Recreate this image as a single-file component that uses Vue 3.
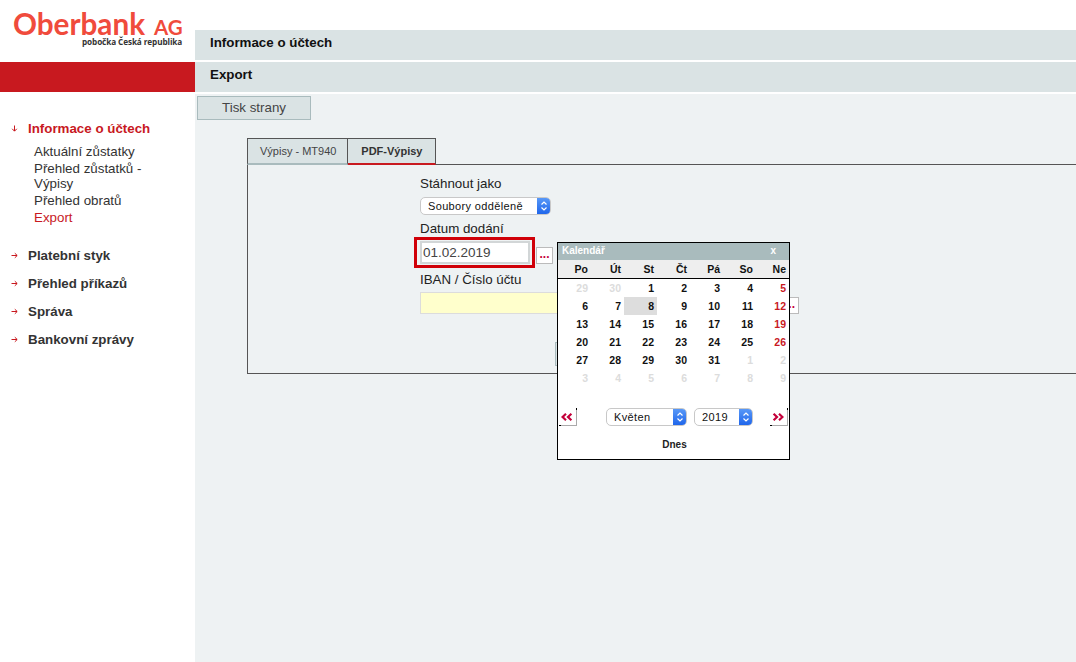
<script setup>
const subItems = [
  { text: 'Aktuální zůstatky' },
  { text: 'Přehled zůstatků - Výpisy' },
  { text: 'Přehled obratů' },
  { text: 'Export', active: true }
]
const navItems = ['Platební styk', 'Přehled příkazů', 'Správa', 'Bankovní zprávy']
const days = ['Po', 'Út', 'St', 'Čt', 'Pá', 'So', 'Ne']
const cells = []
const push = (n, muted) => cells.push({ n, muted })
push(29, true); push(30, true)
for (let i = 1; i <= 31; i++) push(i, false)
push(1, true); push(2, true)
for (let i = 3; i <= 9; i++) push(i, true)
const cellClass = (c, i) => ({
  muted: c.muted,
  sunday: !c.muted && i % 7 === 6,
  today: !c.muted && c.n === 8
})
</script>

<template>
  <div class="page">
    <aside class="side">
      <div class="logo">
        <div class="logo-main"><span>Oberbank</span><span class="logo-ag">AG</span></div>
        <div class="logo-sub">pobočka Česká republika</div>
      </div>
      <div class="band"></div>
      <nav class="nav">
        <div class="nav-item open">
          <svg class="arrow" width="7" height="7" viewBox="0 0 7 7"><path d="M3.5 0.5V6M1.2 3.8 3.5 6.2 5.8 3.8" fill="none" stroke="#c8191f" stroke-width="1"/></svg>
          <span>Informace o účtech</span>
        </div>
        <ul class="sub">
          <li v-for="s in subItems" :key="s.text" :class="{ active: s.active }">{{ s.text }}</li>
        </ul>
        <div class="nav-list">
          <div v-for="n in navItems" :key="n" class="nav-item">
            <svg class="arrow" width="7" height="7" viewBox="0 0 7 7"><path d="M0.5 3.5H6M3.8 1.2 6.2 3.5 3.8 5.8" fill="none" stroke="#c8191f" stroke-width="1"/></svg>
            <span>{{ n }}</span>
          </div>
        </div>
      </nav>
    </aside>

    <main class="main">
      <div class="bar first">Informace o účtech</div>
      <div class="bar">Export</div>
      <div class="content">
        <button class="print">Tisk strany</button>
        <div class="tabs">
          <div class="tab">Výpisy - MT940</div>
          <div class="tab current">PDF-Výpisy</div>
        </div>
        <div class="panel">
          <div class="form">
            <label class="lbl l1">Stáhnout jako</label>
            <div class="sel sel-type">
              <span>Soubory odděleně</span>
              <span class="sel-btn">
                <svg width="8" height="12" viewBox="0 0 8 12"><path d="M1.5 4.5 4 2l2.5 2.5M1.5 7.5 4 10l2.5-2.5" fill="none" stroke="#fff" stroke-width="1.2"/></svg>
              </span>
            </div>
            <label class="lbl l2">Datum dodání</label>
            <div class="date-row">
              <div class="date-frame"><div class="date-input">01.02.2019</div></div>
              <div class="dots">...</div>
            </div>
            <label class="lbl l3">IBAN / Číslo účtu</label>
            <div class="iban-row">
              <div class="iban"></div>
              <div class="dots">...</div>
            </div>
            <div class="submit"></div>

            <div class="cal">
              <div class="cal-title"><span>Kalendář</span><span class="cal-x">x</span></div>
              <div class="cal-grid cal-head">
                <div v-for="d in days" :key="d">{{ d }}</div>
              </div>
              <div class="cal-grid cal-body">
                <div v-for="(c, i) in cells" :key="i" :class="cellClass(c, i)">{{ c.n }}</div>
              </div>
              <div class="cal-nav">
                <div class="step">
                  <svg width="12" height="8" viewBox="0 0 12 8"><path d="M5 .8 1.6 4 5 7.2M10.4 .8 7 4l3.4 3.2" fill="none" stroke="#c4003a" stroke-width="2.2"/></svg>
                </div>
                <div class="sel sel-month">
                  <span>Květen</span>
                  <span class="sel-btn">
                    <svg width="8" height="12" viewBox="0 0 8 12"><path d="M1.5 4.5 4 2l2.5 2.5M1.5 7.5 4 10l2.5-2.5" fill="none" stroke="#fff" stroke-width="1.2"/></svg>
                  </span>
                </div>
                <div class="sel sel-year">
                  <span>2019</span>
                  <span class="sel-btn">
                    <svg width="8" height="12" viewBox="0 0 8 12"><path d="M1.5 4.5 4 2l2.5 2.5M1.5 7.5 4 10l2.5-2.5" fill="none" stroke="#fff" stroke-width="1.2"/></svg>
                  </span>
                </div>
                <div class="step">
                  <svg width="12" height="8" viewBox="0 0 12 8"><path d="M1.6 .8 5 4 1.6 7.2M7 .8 10.4 4 7 7.2" fill="none" stroke="#c4003a" stroke-width="2.2"/></svg>
                </div>
              </div>
              <div class="cal-today">Dnes</div>
            </div>
          </div>
        </div>
      </div>
    </main>
  </div>
</template>

<style>
html, body { margin: 0; background: #fff; }
</style>

<style scoped>
.page {
  display: flex;
  width: 1076px;
  height: 662px;
  overflow: hidden;
  background: #fff;
  font-family: "Liberation Sans", Arial, sans-serif;
  color: #333;
}
.side { width: 195px; flex: none; }
.logo { height: 62px; box-sizing: border-box; padding: 5px 0 0 13px; }
.logo-main {
  display: flex;
  align-items: baseline;
  font-family: Lato, sans-serif;
  font-weight: 700;
  font-size: 29.7px;
  line-height: 37px;
  height: 32px;
  color: #f04b3c;
  white-space: nowrap;
}
.logo-ag { font-size: 20.5px; margin-left: 9px; }
.logo-sub {
  font-family: "Open Sans", sans-serif;
  font-weight: 700;
  font-size: 8.2px;
  line-height: 10px;
  color: #333;
  margin-left: 69px;
  white-space: nowrap;
  letter-spacing: -0.1px;
}
.band { height: 30px; background: #c8191f; }
.nav { padding-top: 29px; }
.nav-item {
  display: flex;
  align-items: center;
  height: 14px;
  font-size: 13.33px;
  font-weight: 700;
  color: #333;
  padding-left: 11px;
}
.nav-item span { margin-left: 10px; }
.nav-item.open { color: #c8191f; }
.arrow { flex: none; margin-top: 1px; }
.sub {
  list-style: none;
  margin: 9px 0 0;
  padding: 0 40px 0 34px;
  font-size: 13.33px;
  line-height: 15px;
  color: #333;
}
.sub li { margin-bottom: 2px; }
.sub li.active { color: #c8191f; }
.nav-list {
  display: flex;
  flex-direction: column;
  gap: 14px;
  margin-top: 23px;
}

.main { flex: 1; padding-top: 30px; min-width: 0; }
.bar {
  height: 30px;
  margin-bottom: 2px;
  background: #dae3e4;
  padding-left: 15px;
  font-size: 13.33px;
  font-weight: 700;
  line-height: 26px;
  color: #111;
}
.content {
  height: 568px;
  background: #eef2f3;
  padding: 2px 0 0 2px;
  box-sizing: border-box;
  margin-top: 2px;
}
.print {
  display: block;
  width: 114px;
  height: 24px;
  padding: 0 0 2px;
  background: #dae3e4;
  border: 1px solid #a9bbbd;
  font: 13.33px "Liberation Sans", Arial, sans-serif;
  color: #444;
}
.tabs { display: flex; margin: 18px 0 0 50px; height: 26px; }
.tab {
  box-sizing: border-box;
  height: 27px;
  padding: 0 11px 0 12px;
  background: #dae3e4;
  border: 1px solid #555;
  border-bottom: 2px solid #a9bbbd;
  font-size: 11px;
  line-height: 25px;
  color: #444;
  white-space: nowrap;
}
.tab + .tab { border-left: 0; }
.tab.current {
  width: 88px;
  padding: 0;
  text-align: center;
  font-weight: 700;
  color: #333;
  border-bottom: 2px solid #c8191f;
}
.panel {
  box-sizing: border-box;
  width: 900px;
  height: 210px;
  margin-left: 50px;
  border: 1px solid #555;
  padding-left: 172px;
}
.form { position: relative; width: 379px; padding-top: 11px; }
.lbl {
  display: block;
  font-size: 13.33px;
  line-height: 15px;
  color: #222;
}
.sel {
  box-sizing: border-box;
  display: flex;
  align-items: center;
  justify-content: space-between;
  height: 18px;
  background: #fff;
  border: 1px solid #c8c8c8;
  border-radius: 5px;
  font-size: 11px;
  letter-spacing: 0.35px;
  color: #111;
  overflow: hidden;
  padding-left: 7px;
}
.sel-btn {
  display: flex;
  align-items: center;
  justify-content: center;
  width: 14px;
  height: 18px;
  margin-right: -1px;
  background: linear-gradient(#5b9bf8, #1c63ea);
}
.sel-type { width: 131px; margin-top: 6px; }
.l2 { margin-top: 6px; }
.date-row { display: flex; align-items: flex-start; margin: 1px 0 0 -6px; height: 31px; }
.date-frame {
  box-sizing: border-box;
  width: 121px;
  height: 31px;
  border: 3px solid #d00008;
  padding: 1px 2px 1px 3px;
}
.date-input {
  box-sizing: border-box;
  width: 110px;
  height: 23px;
  background: #fff;
  border: 2px solid #d2d6d7;
  font-size: 13.5px;
  line-height: 19px;
  padding-left: 1px;
  color: #444;
}
.dots {
  box-sizing: border-box;
  width: 18px;
  height: 17px;
  background: #fff;
  border: 1px solid #bbb;
  font-weight: 700;
  font-size: 12px;
  line-height: 12px;
  text-align: center;
  color: #c4003a;
}
.date-row .dots { width: 17px; margin: 10px 0 0 1px; }
.l3 { margin-top: 4px; }
.iban-row { display: flex; align-items: flex-end; margin-top: 5px; }
.iban {
  box-sizing: border-box;
  width: 361px;
  height: 22px;
  background: #ffffcc;
  border: 1px solid #dcdcdc;
}
.submit {
  box-sizing: border-box;
  width: 100px;
  height: 24px;
  margin: 28px 0 0 135px;
  background: #dae3e4;
  border: 1px solid #a9bbbd;
}
.cal {
  position: absolute;
  left: 137px;
  top: 77px;
  box-sizing: border-box;
  width: 233px;
  height: 218px;
  background: #fff;
  border: 1px solid #000;
  font-size: 10px;
  font-weight: 700;
  color: #111;
}
.cal-title {
  display: flex;
  justify-content: space-between;
  height: 17px;
  padding: 0 13px 0 4px;
  background: #a9bbbd;
  color: #fff;
  line-height: 15px;
}
.cal-grid { display: grid; grid-template-columns: repeat(7, 33px); text-align: right; }
.cal-grid > div { padding-right: 3px; }
.cal-head {
  height: 18px;
  line-height: 18px;
  background: #eee;
  border-bottom: 1px solid #000;
  font-size: 10.5px;
}
.cal-body { grid-auto-rows: 18px; line-height: 18px; font-size: 10.5px; }
.muted { color: #dcdcdc; }
.sunday { color: #c8191f; }
.today { background: #ddd; }
.cal-nav {
  display: flex;
  align-items: center;
  height: 18px;
  margin-top: 21px;
  padding-left: 1px;
}
.step {
  position: relative;
  box-sizing: border-box;
  display: flex;
  align-items: center;
  justify-content: center;
  width: 18px;
  height: 18px;
  padding-right: 1px;
  background: #fff;
  border-right: 1px solid #aaa;
  border-bottom: 1px solid #aaa;
}
.step::before {
  content: "";
  position: absolute;
  left: 0;
  bottom: -1px;
  width: 2px;
  height: 1px;
  background: #000;
}
.step::after {
  content: "";
  position: absolute;
  right: -1px;
  top: 0;
  width: 1px;
  height: 2px;
  background: #000;
}
.sel-month { width: 81px; margin-left: 29px; }
.sel-year { width: 59px; margin: 0 17px 0 7px; }
.sel-month, .sel-year { font-weight: 400; }
.cal-today {
  margin-top: 12px;
  text-align: center;
  line-height: 14px;
  padding-left: 2px;
  color: #222;
}
</style>
